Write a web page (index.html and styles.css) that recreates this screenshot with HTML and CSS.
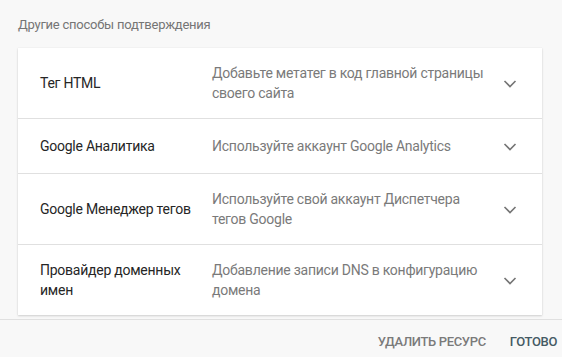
FILE: index.html
```html
<!DOCTYPE html>
<html lang="ru">
<head>
<meta charset="utf-8">
<link rel="stylesheet" href="styles.css">
</head>
<body>
<div class="page">
  <main class="content">
    <div class="title">Другие способы подтверждения</div>
    <div class="card">
      <div class="row tall">
        <div class="label">Тег HTML</div>
        <div class="desc">Добавьте метатег в код главной страницы своего сайта</div>
        <svg class="chev" viewBox="0 0 24 24" width="24" height="24"><polyline points="6.5,10 12,15.5 17.5,10"/></svg>
      </div>
      <div class="row">
        <div class="label">Google Аналитика</div>
        <div class="desc">Используйте аккаунт Google Analytics</div>
        <svg class="chev" viewBox="0 0 24 24" width="24" height="24"><polyline points="6.5,10 12,15.5 17.5,10"/></svg>
      </div>
      <div class="row tall">
        <div class="label">Google Менеджер тегов</div>
        <div class="desc">Используйте свой аккаунт Диспетчера тегов Google</div>
        <svg class="chev" viewBox="0 0 24 24" width="24" height="24"><polyline points="6.5,10 12,15.5 17.5,10"/></svg>
      </div>
      <div class="row tall">
        <div class="label">Провайдер доменных имен</div>
        <div class="desc">Добавление записи DNS в конфигурацию домена</div>
        <svg class="chev" viewBox="0 0 24 24" width="24" height="24"><polyline points="6.5,10 12,15.5 17.5,10"/></svg>
      </div>
    </div>
  </main>
  <footer class="footer">
    <span class="btn btn-secondary">Удалить ресурс</span>
    <span class="btn btn-primary">Готово</span>
  </footer>
</div>
</body>
</html>
```

FILE: styles.css
```css
html, body {
  margin: 0;
  padding: 0;
  height: 100%;
}
body {
  background: #f8f8f8;
  font-family: Roboto, "Noto Sans", Arial, sans-serif;
  overflow: hidden;
}
.page {
  display: flex;
  flex-direction: column;
  height: 357px;
}
.content {
  flex: 1;
  overflow: hidden;
  padding: 15px 20px 0 18px;
  min-height: 0;
}
.title {
  font-size: 13px;
  line-height: 20px;
  color: #757575;
  letter-spacing: -0.25px;
  margin-bottom: 13px;
}
.card {
  background: #fff;
  box-shadow: 0 1px 2px rgba(0, 0, 0, 0.16), 0 0 1px rgba(0, 0, 0, 0.08);
}
.row {
  display: flex;
  align-items: center;
  min-height: 53px;
  box-sizing: border-box;
  padding: 15px 20px 15px 22px;
  border-bottom: 1px solid #e0e0e0;
  font-size: 14px;
  line-height: 20px;
  letter-spacing: -0.25px;
}
.row:last-child {
  border-bottom: none;
}
.label {
  width: 160px;
  flex: none;
  color: #262626;
  margin-right: 12px;
}
.desc {
  flex: 1;
  color: #7a7a7a;
  margin-right: 10px;
}
.chev {
  flex: none;
  fill: none;
  stroke: #757575;
  stroke-width: 1.6;
}
.footer {
  flex: none;
  height: 38px;
  box-sizing: border-box;
  border-top: 1px solid #e0e0e0;
  background: #f8f8f8;
  display: flex;
  justify-content: flex-end;
  align-items: center;
  gap: 24px;
  padding: 6px 5px 0 0;
}
.btn {
  font-size: 13px;
  font-weight: 500;
  text-transform: uppercase;
  letter-spacing: -0.35px;
}
.btn-secondary {
  color: #7a7a7a;
}
.btn-primary {
  color: #455a64;
}
```
